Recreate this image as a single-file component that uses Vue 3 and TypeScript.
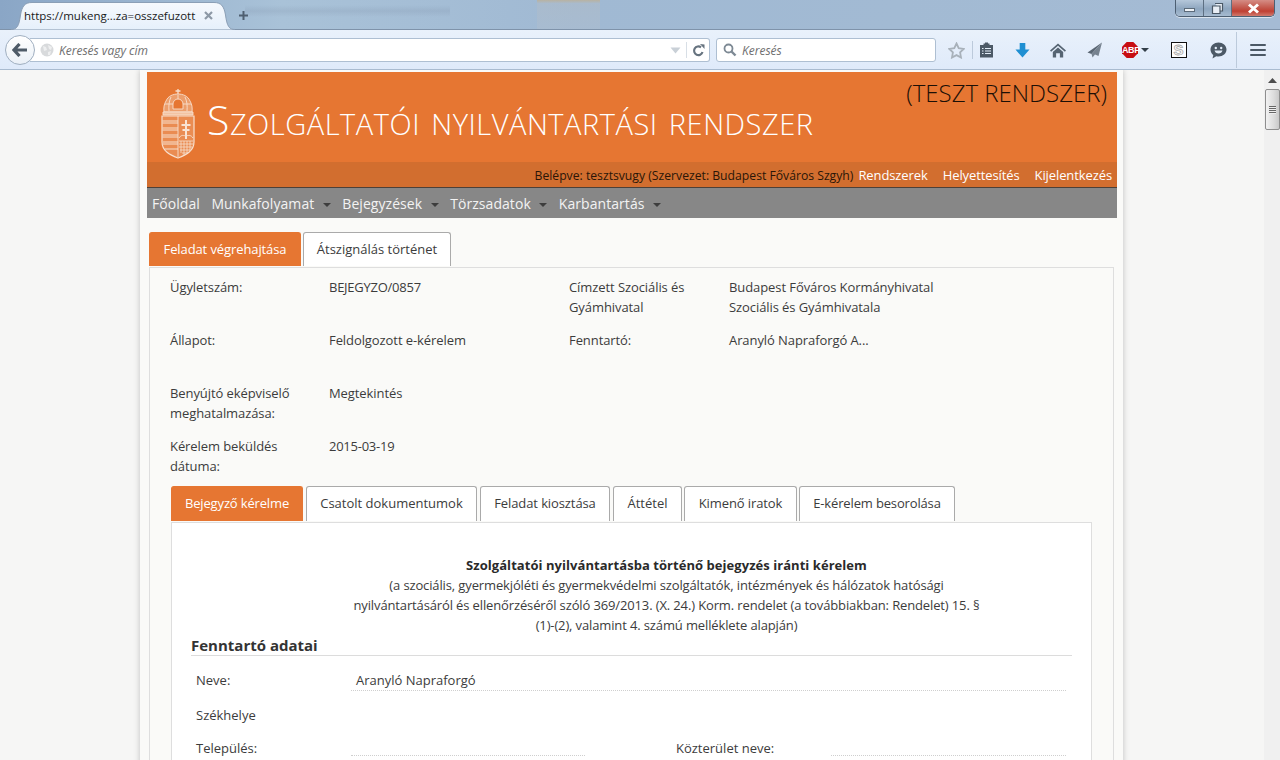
<script setup lang="ts">
const menu = ['Munkafolyamat', 'Bejegyzések', 'Törzsadatok', 'Karbantartás']
const innerTabs = ['Csatolt dokumentumok', 'Feladat kiosztása', 'Áttétel', 'Kimenő iratok', 'E-kérelem besorolása']
</script>

<template>
  <div class="window">
    <div class="titlebar">
      <div class="tab">
        <svg class="tab-shape" width="224" height="29" viewBox="0 0 224 29">
          <defs>
            <linearGradient id="tabfill" x1="0" y1="0" x2="0" y2="1">
              <stop offset="0" stop-color="#f6f9fd" />
              <stop offset="1" stop-color="#e6f0fb" />
            </linearGradient>
          </defs>
          <path d="M0 28.500C6 28.500 8 25 9.500 14 11 5 14 1.500 21 1.500H203C210 1.500 213 5 214.500 14 216 25 218 28.500 224 28.500" fill="url(#tabfill)" stroke="#8b9fb6" />
        </svg>
        <span class="tab-title">https://mukeng...za=osszefuzott</span>
        <svg class="tab-close" width="9" height="9" viewBox="0 0 9 9"><path d="M1 1l7 7M8 1l-7 7" stroke="#8d99a6" stroke-width="2.200" /></svg>
      </div>
      <svg class="new-tab" width="11" height="11" viewBox="0 0 11 11"><path d="M5.500 1v9M1 5.500h9" stroke="#4f5f70" stroke-width="2" /></svg>
      <div class="win-buttons">
        <div class="win-btn min"><span class="min-bar"></span></div>
        <div class="win-btn restore">
          <svg width="13" height="13" viewBox="0 0 13 13"><path d="M4 1.500h7.500V9H9.500M1.500 4H9v7.500H1.500z" fill="#e8eef5" stroke="#4a5866" stroke-width="1.200" /></svg>
        </div>
        <div class="win-btn close">
          <svg width="13" height="11" viewBox="0 0 13 11"><path d="M2 1.500l9 8M11 1.500l-9 8" stroke="#fff" stroke-width="3" /></svg>
        </div>
      </div>
    </div>

    <div class="toolbar">
      <div class="back">
        <svg width="16" height="14" viewBox="0 0 16 14"><path d="M7.500 1L2 7l5.500 6M2.500 7H15" fill="none" stroke="#4e5b68" stroke-width="3.200" /></svg>
      </div>
      <div class="urlbar">
        <svg class="globe" width="14" height="14" viewBox="0 0 14 14">
          <circle cx="7" cy="7" r="6.500" fill="#d8dadc" />
          <path d="M3 3l3 1 1 3-3 1zM8 2l4 2-1 3-2-1zM8 9l3-1-1 4-2 0z" fill="#eeeff0" />
        </svg>
        <span class="placeholder">Keresés vagy cím</span>
        <svg class="drop" width="11" height="7" viewBox="0 0 11 7"><path d="M.5.500h10L5.500 6.500z" fill="#c9d0d7" /></svg>
        <span class="url-sep"></span>
        <svg class="reload" width="13" height="13" viewBox="0 0 13 13"><path d="M10.500 8A4.300 4.300 0 1 1 9 3.300" fill="none" stroke="#66737f" stroke-width="2.200" /><path d="M8 0l4.500.5v4.500z" fill="#66737f" /></svg>
      </div>
      <div class="searchbar">
        <svg width="14" height="14" viewBox="0 0 14 14"><circle cx="5.500" cy="5.500" r="4" fill="none" stroke="#7d8994" stroke-width="1.800" /><path d="M8.500 8.500l4 4" stroke="#7d8994" stroke-width="2.400" /></svg>
        <span class="placeholder">Keresés</span>
      </div>
      <div class="tool star">
        <svg width="17" height="17" viewBox="0 0 17 17"><path d="M8.500 1.500l2.200 4.700 5 .7-3.600 3.500.9 5.100-4.500-2.400-4.500 2.400.9-5.100L1.300 6.900l5-.7z" fill="none" stroke="#a8b1ba" stroke-width="1.800" /></svg>
      </div>
      <span class="tool-sep"></span>
      <div class="tool list">
        <svg width="15" height="16" viewBox="0 0 15 16"><path d="M1 3h3.500V1.500h1.500V.5h3v1h1.500V3H14v12.500H1z" fill="#4c5966" /><path d="M3 6.500h1.500M3 9h1.500M3 11.500h1.500M6 6.500h6M6 9h6M6 11.500h6" stroke="#e3edf8" stroke-width="1.200" /></svg>
      </div>
      <div class="tool">
        <svg width="15" height="15" viewBox="0 0 16 16"><path d="M5 0h6v7h4.500L8 15.500.5 7H5z" fill="#1f8fd2" /></svg>
      </div>
      <div class="tool">
        <svg width="16" height="15" viewBox="0 0 17 15"><path d="M8.500 0L17 7.500l-1.200 1.300-7.300-6.300-7.300 6.300L0 7.500z" fill="#566472" /><path d="M3 9l5.500-4.700L14 9v6h-3.500v-4.500h-4V15H3z" fill="#566472" /></svg>
      </div>
      <div class="tool">
        <svg width="15" height="16" viewBox="0 0 15 16"><path d="M15 .5L.5 10.500l4 1.500z" fill="#5a6673" /><path d="M15 .5L4.500 12l1 3.500 2.500-3 3.500 1.500z" fill="#76828f" /></svg>
      </div>
      <div class="tool abp">
        <svg width="16" height="16" viewBox="0 0 16 16"><path d="M4.700 0h6.600L16 4.700v6.600L11.300 16H4.700L0 11.300V4.700z" fill="#c70d12" /></svg>
        <span class="abp-text">ABP</span>
        <span class="caret"></span>
      </div>
      <div class="tool">
        <div class="s-box">S</div>
      </div>
      <div class="tool smile">
        <svg width="17" height="17" viewBox="0 0 17 17"><path d="M8.500.5c4.400 0 8 3 8 7s-3.600 7-8 7c-.8 0-1.500-.1-2.200-.3L2.500 16.500l.8-3.500C1.500 11.700.5 9.700.5 7.500c0-4 3.600-7 8-7z" fill="#4c5966" /><circle cx="5.800" cy="6" r="1.200" fill="#e3edf8" /><circle cx="11.200" cy="6" r="1.200" fill="#e3edf8" /><path d="M4.500 8.500h8c-.5 2-2 3-4 3s-3.500-1-4-3z" fill="#e3edf8" /></svg>
      </div>
      <span class="tool-sep tall"></span>
      <div class="tool burger">
        <span></span><span></span><span></span>
      </div>
    </div>

    <div class="viewport">
      <div class="page">
        <div class="sheet">
          <header class="banner">
            <svg class="crest" width="36" height="70" viewBox="0 0 36 70" fill="none" stroke="#f8dfcd" stroke-width="0.900">
              <path d="M18 0v5M15.500 2h5" stroke-width="1.300" />
              <path d="M18 5c-5 0-10 2-12 7-2 3-2.500 7-2 11h28c.5-4 0-8-2-11-2-5-7-7-12-7z" fill="#ec9e6c" />
              <path d="M18 6v4M11 8c-2 4-2.500 9-2 14M25 8c2 4 2.500 9 2 14M5 15h26" />
              <path d="M13 20v-5a5 5 0 0 1 10 0v5z" fill="#e67632" />
              <path d="M3 23h30v3H3z" fill="#f3c3a2" />
              <path d="M2 27h32v26c0 9-8 13-16 16C10 66 2 62 2 53z" fill="#ea8c52" stroke-width="1.200" />
              <path d="M18 27v41" />
              <path d="M2.500 32h15.500M2.500 34h15.500M2.500 39h15.500M2.500 41h15.500M2.500 46h15.500M2.500 48h15.500M3 53h15M3 55h15M5 60h13" stroke-width="1.100" />
              <path d="M26 31v19M21.500 36h9M22.500 41h7" stroke-width="2" stroke="#f9e3d3" />
              <path d="M19 49c2-3 3.500-3 7-2 3-1 5-1 7 2" />
              <path d="M19 52l14 0M19 55h14M19 58h13M20 61h10M22 64h6M21 52v12M24 52v14M27 52v13M30 52v10" stroke-width="0.800" />
            </svg>
            <h1 class="app-title">Szolgáltatói nyilvántartási rendszer</h1>
            <div class="test-flag">(TESZT RENDSZER)</div>
          </header>
          <div class="userbar">
            <span class="who">Belépve: tesztsvugy (Szervezet: Budapest Főváros Szgyh)</span>
            <a>Rendszerek</a>
            <a>Helyettesítés</a>
            <a>Kijelentkezés</a>
          </div>
          <nav class="mainnav">
            <span class="nav-item">Főoldal</span>
            <span v-for="m in menu" :key="m" class="nav-item has-caret">{{ m }}<span class="caret"></span></span>
          </nav>

          <div class="content">
            <div class="tabs outer">
              <span class="tb active">Feladat végrehajtása</span>
              <span class="tb">Átszignálás történet</span>
            </div>
            <section class="panel">
              <div class="facts">
                <div>Ügyletszám:</div>
                <div class="tight">BEJEGYZO/0857</div>
                <div>Címzett Szociális és Gyámhivatal</div>
                <div>Budapest Főváros Kormányhivatal Szociális és Gyámhivatala</div>

                <div>Állapot:</div>
                <div>Feldolgozott e-kérelem</div>
                <div>Fenntartó:</div>
                <div>Aranyló Napraforgó A...</div>

                <div>Benyújtó eképviselő meghatalmazása:</div>
                <div>Megtekintés</div>
                <div></div>
                <div></div>

                <div>Kérelem beküldés dátuma:</div>
                <div class="tight">2015-03-19</div>
                <div></div>
                <div></div>
              </div>

              <div class="tabs inner">
                <span class="tb active">Bejegyző kérelme</span>
                <span v-for="t in innerTabs" :key="t" class="tb">{{ t }}</span>
              </div>
              <div class="subpanel">
                <div class="request-head">
                  <strong>Szolgáltatói nyilvántartásba történő bejegyzés iránti kérelem</strong>
                  <p>(a szociális, gyermekjóléti és gyermekvédelmi szolgáltatók, intézmények és hálózatok hatósági</p>
                  <p>nyilvántartásáról és ellenőrzéséről szóló 369/2013. (X. 24.) Korm. rendelet (a továbbiakban: Rendelet) 15. §</p>
                  <p>(1)-(2), valamint 4. számú melléklete alapján)</p>
                </div>
                <h2 class="section">Fenntartó adatai</h2>
                <div class="form-row first">
                  <span class="r-label">Neve:</span>
                  <span class="r-field wide">Aranyló Napraforgó</span>
                </div>
                <div class="form-row plain">
                  <span class="r-label">Székhelye</span>
                </div>
                <div class="form-row last">
                  <span class="r-label">Település:</span>
                  <span class="r-field short"></span>
                  <span class="r-label second">Közterület neve:</span>
                  <span class="r-field tail"></span>
                </div>
              </div>
            </section>
          </div>
        </div>
      </div>

      <div class="scrollbar">
        <svg class="sb-arrow" width="9" height="5" viewBox="0 0 9 5"><path d="M4.500 0L9 5H0z" fill="#4d4d4d" /></svg>
        <div class="thumb"><span></span><span></span><span></span><span></span></div>
      </div>
    </div>
  </div>
</template>

<style>
html, body {
  margin: 0;
  overflow: hidden;
}
</style>

<style scoped>
.window {
  width: 1280px;
  height: 760px;
  overflow: hidden;
  display: flex;
  flex-direction: column;
  font-family: "Open Sans", "Liberation Sans", sans-serif;
  font-size: 13px;
  color: #3c3c3c;
}

/* browser frame */
.titlebar {
  height: 30px;
  flex: none;
  box-sizing: border-box;
  display: flex;
  align-items: flex-start;
  padding: 1px 5px 0 11px;
  background-color: #a6bbd3;
  background-image:
    linear-gradient(rgba(110, 125, 150, 0), rgba(110, 125, 150, .16) 50%, rgba(110, 125, 150, 0)),
    linear-gradient(#b8b2a2, rgba(176, 188, 200, .55) 12%, rgba(176, 190, 206, .45)),
    linear-gradient(90deg, #8aa6c6 0, #a9c2d8 22%, #a0b9d3 45%, #a2bad3 70%, #a5bbd4 100%);
  background-size: 205px 12px, 63px 100%, 100% 100%;
  background-position: 245px 5px, 537px 0, 0 0;
  background-repeat: no-repeat;
  border-bottom: 1px solid #7f93aa;
}
.tab {
  width: 224px;
  height: 29px;
  flex: none;
  box-sizing: border-box;
  position: relative;
  display: flex;
  align-items: center;
  padding: 0 0 0 13px;
  color: #1a1a1a;
  font-size: 11.500px;
  white-space: nowrap;
}
.tab-shape {
  position: absolute;
  left: 0;
  top: 0;
}
.tab-title {
  position: relative;
  width: 180px;
}
.tab-close {
  position: relative;
}
.new-tab {
  margin: 9px 0 0 3px;
}
.win-buttons {
  margin: -1px 0 0 auto;
  width: 100px;
  height: 17px;
  display: flex;
  border: 1px solid #4d5f72;
  border-top: 0;
  border-radius: 0 0 5px 5px;
  box-sizing: border-box;
  overflow: hidden;
  box-shadow: 0 1px 0 rgba(255, 255, 255, .6);
}
.win-btn {
  display: flex;
  align-items: center;
  justify-content: center;
  border-right: 1px solid #5d6f82;
}
.min, .restore {
  width: 27px;
  background: linear-gradient(#b5c7da, #8ea6bf 55%, #a6bbd0);
}
.min-bar {
  width: 11px;
  height: 4px;
  margin-top: 4px;
  background: #eef2f6;
  border: 1px solid #5c6b7a;
  box-sizing: border-box;
}
.close {
  flex: 1;
  border-right: 0;
  background: linear-gradient(#d58d85, #c3564a 50%, #c04033 70%, #d07a6e);
}
.toolbar {
  height: 40px;
  flex: none;
  box-sizing: border-box;
  display: flex;
  align-items: center;
  padding: 1px 0 0 5px;
  background: linear-gradient(#e9f1fb, #dfeafa);
  border-bottom: 1px solid #a9bbd0;
}
.back {
  width: 30px;
  height: 30px;
  flex: none;
  z-index: 1;
  box-sizing: border-box;
  display: flex;
  align-items: center;
  justify-content: center;
  background: linear-gradient(#fff, #eaf0f7);
  border: 1px solid #a0afc0;
  border-radius: 50%;
}
.urlbar {
  width: 680px;
  height: 24px;
  margin-left: -5px;
  box-sizing: border-box;
  display: flex;
  align-items: center;
  padding: 0 4px 0 10px;
  background: #fff;
  border: 1px solid #aebfd2;
  border-left: 0;
  border-radius: 0 3px 3px 0;
}
.placeholder {
  font-style: italic;
  font-size: 12px;
  color: #6e6e6e;
}
.globe {
  margin-right: 5px;
}
.drop {
  margin-left: auto;
}
.url-sep {
  width: 1px;
  height: 16px;
  margin: 0 5px;
  background: #d8dfe6;
}
.searchbar {
  width: 220px;
  height: 24px;
  margin-left: 6px;
  box-sizing: border-box;
  display: flex;
  align-items: center;
  gap: 5px;
  padding-left: 6px;
  background: #fff;
  border: 1px solid #aebfd2;
  border-radius: 3px;
}
.tool {
  width: 36px;
  height: 24px;
  flex: none;
  display: flex;
  align-items: center;
  justify-content: center;
}
.star {
  margin-left: 4px;
  width: 32px;
}
.list {
  width: 26px;
  margin-right: 5px;
}
.tool-sep {
  width: 1px;
  height: 18px;
  flex: none;
  background: #bccadb;
}
.tool-sep.tall {
  height: 36px;
}
.abp {
  width: 50px;
  justify-content: flex-start;
  padding-left: 10px;
  box-sizing: border-box;
  position: relative;
}
.abp-text {
  position: absolute;
  left: 10px;
  width: 16px;
  text-align: center;
  top: 6px;
  font: bold 9px/12px "Liberation Sans", sans-serif;
  letter-spacing: -.4px;
  color: #fff;
}
.abp .caret {
  margin-left: 3px;
  border-top-color: #333e49;
}
.s-box {
  width: 14px;
  height: 14px;
  margin-right: 3px;
  border: 1px solid #111;
  background: #fff;
  box-sizing: content-box;
  text-align: center;
  font: bold 15px/14px "Liberation Sans", sans-serif;
  color: #fff;
  -webkit-text-stroke: .8px #a8a8a8;
}
.smile {
  margin-left: 2px;
  width: 36px;
}
.burger {
  width: 42px;
  flex-direction: column;
  gap: 3px;
}
.burger span {
  width: 16px;
  height: 2px;
  background: #4c5966;
  border-radius: 1px;
}
.viewport {
  flex: 1;
  min-height: 0;
  display: flex;
}
.page {
  flex: 1;
  min-width: 0;
  overflow: hidden;
  background: #f6f6f5;
}
.sheet {
  width: 970px;
  margin-left: 140px;
  padding: 2px 6px 0 7px;
  background: #fafaf8;
  box-shadow: 0 0 6px rgba(0, 0, 0, .22);
  min-height: 100%;
}
.scrollbar {
  width: 16px;
  flex: none;
  background: #f0f0f0;
  display: flex;
  flex-direction: column;
  align-items: center;
  padding-top: 8px;
  box-sizing: border-box;
}
.sb-arrow {
  margin-left: 1px;
}
.thumb {
  width: 15px;
  height: 41px;
  margin-top: 6px;
  box-sizing: border-box;
  display: flex;
  flex-direction: column;
  align-items: center;
  justify-content: center;
  gap: 1px;
  background: linear-gradient(90deg, #f2f2f2, #dcdcdc 60%, #c9c9c9);
  border: 1px solid #8e8e8e;
  border-radius: 2px;
}
.thumb span {
  width: 7px;
  height: 1px;
  background: #666;
  box-shadow: 0 1px 0 #eee;
}

/* header */
.banner {
  height: 90px;
  display: flex;
  align-items: flex-start;
  background: #e67632;
}
.crest {
  margin: 17px 0 0 13px;
  flex: none;
}
.app-title {
  margin: 17px 0 0 11px;
  font-size: 41px;
  line-height: 60px;
  letter-spacing: .53px;
  font-weight: 300;
  font-variant: small-caps;
  color: #fff;
  white-space: nowrap;
}
.test-flag {
  margin: 3px 10px 0 auto;
  font-size: 24px;
  line-height: 36px;
  font-weight: 300;
  color: #1c0f06;
  white-space: nowrap;
}
.userbar {
  height: 26px;
  box-sizing: border-box;
  display: flex;
  justify-content: flex-end;
  align-items: center;
  padding: 1px 5px 0 0;
  background: #d26e2f;
  border-bottom: 1px solid #4c4038;
}
.who {
  font-size: 12.200px;
  color: #2a1608;
}
.userbar a {
  color: #fff;
  margin-left: 15px;
  letter-spacing: -.1px;
  cursor: pointer;
}
.userbar a:first-of-type {
  margin-left: 5px;
}
.mainnav {
  height: 30px;
  display: flex;
  align-items: center;
  gap: 11.500px;
  padding-left: 5px;
  background: #878787;
  font-size: 14px;
  letter-spacing: .06px;
  color: #f3f3f3;
}
.caret {
  display: inline-block;
  width: 0;
  height: 0;
  margin-left: 8.500px;
  vertical-align: 2px;
  border-left: 4px solid transparent;
  border-right: 4px solid transparent;
  border-top: 4px solid #3d3d3d;
}
.has-caret {
  white-space: nowrap;
}

/* tabs */
.content {
  padding: 14px 3px 0 2px;
}
.tabs {
  display: flex;
  gap: 3px;
}
.tb {
  height: 34px;
  box-sizing: border-box;
  display: flex;
  align-items: center;
  justify-content: center;
  padding-bottom: 2px;
  background: #fff;
  border: 1px solid #aaa;
  border-bottom: 0;
  border-radius: 3px 3px 0 0;
  color: #3c3c3c;
  white-space: nowrap;
}
.tb.active {
  background: #e67632;
  border-color: #e67632;
  color: #fff;
}
.tabs.outer .tb:nth-child(1) { width: 152px; letter-spacing: -.1px; }
.tabs.outer .tb:nth-child(2) { width: 148px; margin-left: -1px; }
.tabs.inner .tb:nth-child(1) { width: 132px; letter-spacing: -.15px; }
.tabs.inner .tb:nth-child(2) { width: 171px; }
.tabs.inner .tb:nth-child(3) { width: 130px; letter-spacing: -.1px; }
.tabs.inner .tb:nth-child(4) { width: 69px; }
.tabs.inner .tb:nth-child(5) { width: 113px; margin-left: -1px; letter-spacing: -.1px; }
.tabs.inner .tb:nth-child(6) { width: 156px; margin-left: -1px; letter-spacing: -.15px; }
.panel {
  box-sizing: border-box;
  margin-top: 1px;
  padding: 9px 21px 40px 20px;
  border: 1px solid #dedede;
  background: #fafaf8;
}
.facts {
  display: grid;
  grid-template-columns: 159px 240px 160px 240px;
  grid-auto-rows: 40px;
  row-gap: 13px;
  line-height: 20px;
  letter-spacing: -.08px;
}
.facts .tight {
  letter-spacing: -.25px;
}
.tabs.inner {
  margin-top: 10px;
  margin-left: 1px;
}
.tabs.inner .tb {
  height: 35px;
}
.subpanel {
  margin: 1px 0 0 1px;
  padding: 32px 19px 60px;
  border: 1px solid #dedede;
  background: #fff;
}
.request-head {
  padding-left: 70px;
  text-align: center;
  line-height: 20px;
}
.request-head strong {
  font-weight: 700;
  letter-spacing: .05px;
  color: #2a2a2a;
}
.request-head p {
  margin: 0;
  letter-spacing: -.13px;
}
.section {
  margin: 0;
  height: 20px;
  font-size: 15px;
  line-height: 20px;
  font-weight: 700;
  color: #333;
  border-bottom: 1px solid #dcdcdc;
}
.form-row {
  display: flex;
  padding-left: 5px;
  line-height: 20px;
}
.form-row.first {
  margin-top: 14px;
  height: 20px;
}
.form-row.plain {
  margin-top: 15px;
}
.form-row.last {
  margin-top: 13px;
}
.r-label {
  width: 155px;
  flex: none;
}
.r-field {
  box-sizing: border-box;
  border-bottom: 1px dotted #cfcfcf;
  padding-left: 5px;
  height: 21px;
}
.r-field.wide {
  width: 715px;
}
.r-field.short {
  width: 234px;
  height: 18px;
}
.r-label.second {
  margin-left: 91px;
}
.r-field.tail {
  width: 235px;
  height: 18px;
}
</style>
